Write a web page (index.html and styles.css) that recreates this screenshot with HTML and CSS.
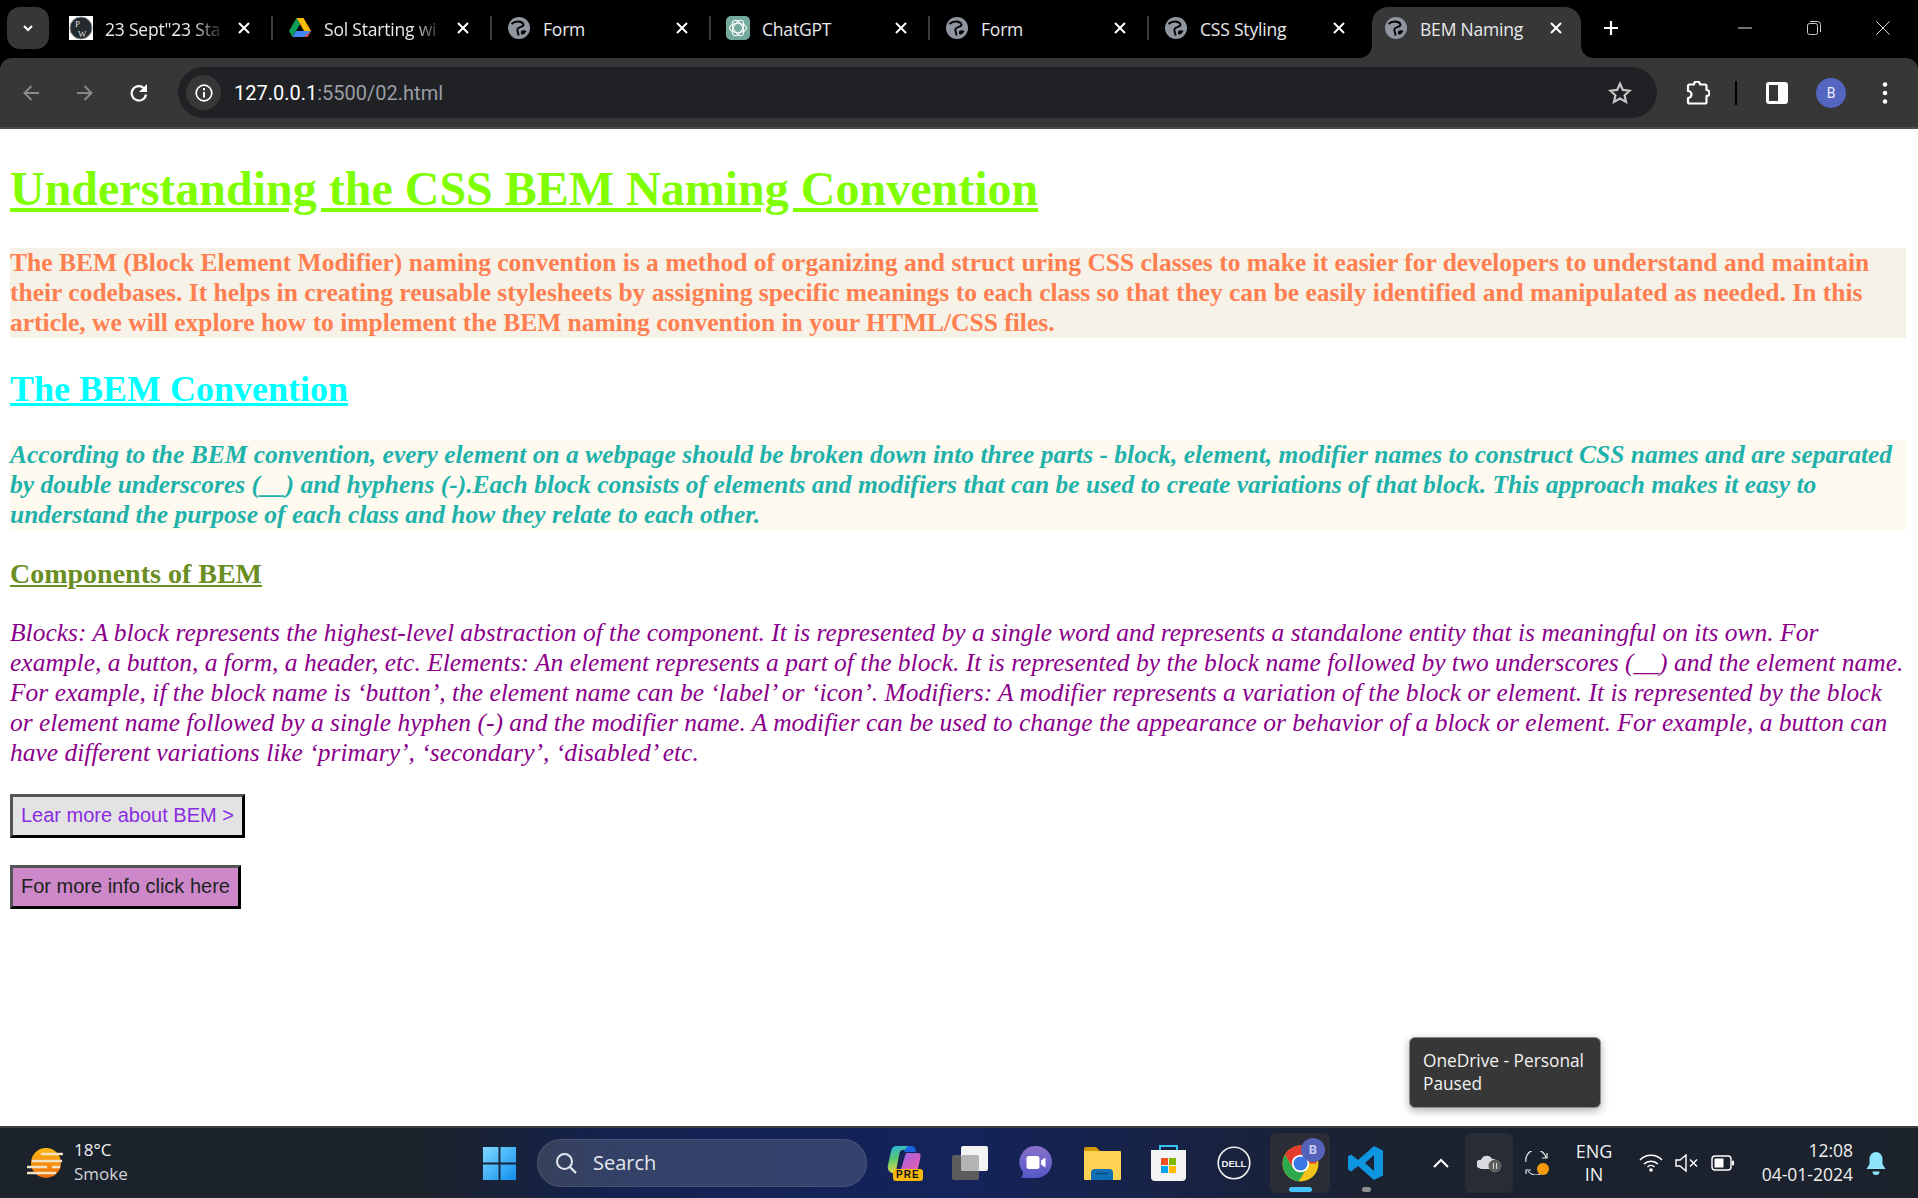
FILE: index.html
```html
<!DOCTYPE html>
<html lang="en">
<head>
<meta charset="utf-8">
<title>BEM Naming</title>
<link rel="stylesheet" href="styles.css">
</head>
<body>
<div class="screen">
  <header class="chrome">
    <div class="tabstrip">
      <div class="tab-search"><svg width="14" height="14" viewBox="0 0 14 14"><path d="M3 5l4 4 4-4" fill="none" stroke="#fff" stroke-width="2"/></svg></div>
      <div class="tab">
        <svg class="fav" width="24" height="24" viewBox="0 0 24 24"><rect width="24" height="24" fill="#fff"/><circle cx="12" cy="12" r="11" fill="#232b2f" stroke="#8d9194" stroke-width="1"/><text x="6" y="11" class="pw">P</text><text x="9" y="20.500" class="pw">W</text></svg>
        <span class="tab-title fade">23 Sept"23 Sta</span><svg class="tab-x" width="12" height="12" viewBox="0 0 12 12"><use href="#close"/></svg>
      </div>
      <div class="tab">
        <svg class="fav fav-drive" width="22" height="20" viewBox="0 0 22 20"><path d="M7.500 0h7l7.500 13h-7z" fill="#fbbc04"/><path d="M7.500 0L0 13l3.500 6L11 6z" fill="#0f9d58"/><path d="M7 13h15l-3.500 6h-15z" fill="#4285f4"/><path d="M22 13l-3.500 6H15z" fill="#ea4335"/></svg>
        <span class="tab-title fade">Sol Starting wi</span><svg class="tab-x" width="12" height="12" viewBox="0 0 12 12"><use href="#close"/></svg>
      </div>
      <div class="tab">
        <svg class="fav fav-globe" width="22" height="22" viewBox="0 0 22 22"><use href="#globe"/></svg>
        <span class="tab-title">Form</span><svg class="tab-x" width="12" height="12" viewBox="0 0 12 12"><use href="#close"/></svg>
      </div>
      <div class="tab">
        <svg class="fav" width="24" height="24" viewBox="0 0 24 24"><rect width="24" height="24" rx="5" fill="#74aa9c"/><g fill="none" stroke="#fff" stroke-width="1.100"><ellipse cx="12" cy="12" rx="8.500" ry="4.500"/><ellipse cx="12" cy="12" rx="8.500" ry="4.500" transform="rotate(60 12 12)"/><ellipse cx="12" cy="12" rx="8.500" ry="4.500" transform="rotate(120 12 12)"/></g></svg>
        <span class="tab-title">ChatGPT</span><svg class="tab-x" width="12" height="12" viewBox="0 0 12 12"><use href="#close"/></svg>
      </div>
      <div class="tab">
        <svg class="fav fav-globe" width="22" height="22" viewBox="0 0 22 22"><use href="#globe"/></svg>
        <span class="tab-title">Form</span><svg class="tab-x" width="12" height="12" viewBox="0 0 12 12"><use href="#close"/></svg>
      </div>
      <div class="tab tab-last">
        <svg class="fav fav-globe" width="22" height="22" viewBox="0 0 22 22"><use href="#globe"/></svg>
        <span class="tab-title">CSS Styling</span><svg class="tab-x" width="12" height="12" viewBox="0 0 12 12"><use href="#close"/></svg>
      </div>
      <div class="tab tab-active">
        <svg class="fav fav-globe" width="22" height="22" viewBox="0 0 22 22"><use href="#globe"/></svg>
        <span class="tab-title">BEM Naming</span><svg class="tab-x" width="12" height="12" viewBox="0 0 12 12"><use href="#close"/></svg>
      </div>
      <div class="tab-new"><svg width="16" height="16" viewBox="0 0 16 16"><path d="M8 1v14M1 8h14" stroke="#fff" stroke-width="2.200"/></svg></div>
      <div class="win-controls">
        <svg width="14" height="14" viewBox="0 0 14 14"><path d="M0 7h14" stroke="#ddd" stroke-width="1"/></svg>
        <svg width="14" height="14" viewBox="0 0 14 14"><rect x=".5" y="2.500" width="10" height="11" rx="2" fill="none" stroke="#ccc"/><path d="M3 .5h7.500a3 3 0 0 1 3 3V11" fill="none" stroke="#ccc"/></svg>
        <svg width="14" height="14" viewBox="0 0 14 14"><path d="M.5.5l13 13M13.500.5l-13 13" stroke="#ddd" stroke-width="1"/></svg>
      </div>
    </div>
    <div class="toolbar">
      <svg class="nav" width="18" height="18" viewBox="0 0 18 18"><path d="M17 9H3M9.500 2L2.500 9l7 7" fill="none" stroke="#8a8a8a" stroke-width="2"/></svg>
      <svg class="nav" width="18" height="18" viewBox="0 0 18 18"><path d="M1 9h14M8.500 2l7 7-7 7" fill="none" stroke="#8a8a8a" stroke-width="2"/></svg>
      <svg class="nav nav-reload" width="18" height="18" viewBox="0 0 18 18"><path d="M16 10.500A7.200 7.200 0 1 1 14 4.300" fill="none" stroke="#fff" stroke-width="2.200"/><path d="M17 0v8H9z" fill="#fff"/></svg>
      <div class="omnibox">
        <span class="info"><svg width="18" height="18" viewBox="0 0 18 18"><circle cx="9" cy="9" r="7.800" fill="none" stroke="#fff" stroke-width="1.700"/><path d="M9 8v5.500M9 4v2.200" stroke="#fff" stroke-width="2"/></svg></span>
        <span class="url"><span class="url-host">127.0.0.1</span>:5500/02.html</span>
        <svg class="star" width="24" height="24" viewBox="0 0 22 22"><path d="M11 2.500l2.600 5.700 6.200.7-4.600 4.200 1.300 6.100L11 16.100l-5.500 3.100 1.300-6.100-4.600-4.200 6.200-.7z" fill="none" stroke="#c7c7c7" stroke-width="2"/></svg>
      </div>
      <div class="tools">
        <svg width="24" height="24" viewBox="0 0 24 24"><path d="M2 5a1.500 1.500 0 0 1 1.500-1.500H8a3 3 0 0 1 6 0h5a1.500 1.500 0 0 1 1.500 1.500v4a3 3 0 0 1 0 6v6a1.500 1.500 0 0 1-1.500 1.500H3.500A1.500 1.500 0 0 1 2 21v-4a3.500 3.500 0 0 0 0-7z" fill="none" stroke="#fff" stroke-width="2.200" stroke-linejoin="round"/></svg>
        <span class="tool-sep"></span>
        <svg width="22" height="22" viewBox="0 0 22 22"><rect width="22" height="22" rx="3" fill="#fff"/><rect x="3" y="3" width="9" height="16" fill="#373737"/></svg>
        <span class="avatar">B</span>
        <svg width="6" height="24" viewBox="0 0 6 24"><circle cx="3" cy="3.500" r="2.300" fill="#fff"/><circle cx="3" cy="12" r="2.300" fill="#fff"/><circle cx="3" cy="20.500" r="2.300" fill="#fff"/></svg>
      </div>
    </div>
  </header>

  <main class="page">
    <h1 class="title">Understanding the CSS BEM Naming Convention</h1>
    <p class="intro">The BEM (Block Element Modifier) naming convention is a method of organizing and struct uring CSS classes to make it easier for developers to understand and maintain their codebases. It helps in creating reusable stylesheets by assigning specific meanings to each class so that they can be easily identified and manipulated as needed. In this article, we will explore how to implement the BEM naming convention in your HTML/CSS files.</p>
    <h2 class="subtitle">The BEM Convention</h2>
    <p class="convention">According to the BEM convention, every element on a webpage should be broken down into three parts - block, element, modifier names to construct CSS names and are separated by double underscores (__) and hyphens (-).Each block consists of elements and modifiers that can be used to create variations of that block. This approach makes it easy to understand the purpose of each class and how they relate to each other.</p>
    <h3 class="section">Components of BEM</h3>
    <p class="body-text">Blocks: A block represents the highest-level abstraction of the component. It is represented by a single word and represents a standalone entity that is meaningful on its own. For example, a button, a form, a header, etc. Elements: An element represents a part of the block. It is represented by the block name followed by two underscores (__) and the element name. For example, if the block name is ‘button’, the element name can be ‘label’ or ‘icon’. Modifiers: A modifier represents a variation of the block or element. It is represented by the block or element name followed by a single hyphen (-) and the modifier name. A modifier can be used to change the appearance or behavior of a block or element. For example, a button can have different variations like ‘primary’, ‘secondary’, ‘disabled’ etc.</p>
    <button class="btn btn-learn">Lear more about BEM &gt;</button>
    <button class="btn btn-info">For more info click here</button>
  </main>

  <div class="tooltip">OneDrive - Personal<br>Paused</div>

  <footer class="taskbar">
    <div class="weather">
      <svg width="36" height="30" viewBox="0 0 36 30"><defs><linearGradient id="sun" x1="0" y1="0" x2="0" y2="1"><stop offset="0" stop-color="#fdb813"/><stop offset="1" stop-color="#ec6a08"/></linearGradient></defs><circle cx="19" cy="15" r="15" fill="url(#sun)"/><path d="M15 6h20M6 13h28M1 19h18M26 19h6M1 25h27" stroke="#f1e3c4" stroke-width="2.600" stroke-linecap="round"/></svg>
      <div class="weather-text"><span class="temp">18°C</span><span class="cond">Smoke</span></div>
    </div>
    <div class="task-center">
      <svg class="start" width="35" height="35" viewBox="0 0 36 36"><defs><linearGradient id="win" x1="0" y1="0" x2="1" y2="1"><stop offset="0" stop-color="#7fd9ff"/><stop offset="1" stop-color="#0f8fef"/></linearGradient></defs><path d="M1 1h16v16H1zM19 1h16v16H19zM1 19h16v16H1zM19 19h16v16H19z" fill="url(#win)"/></svg>
      <div class="search">
        <svg width="24" height="24" viewBox="0 0 24 24"><circle cx="10.500" cy="10.500" r="7.500" fill="none" stroke="#e4e7ef" stroke-width="2"/><path d="M16 16l6 6" stroke="#e4e7ef" stroke-width="2.200"/></svg>
        <span class="search-text">Search</span>
      </div>
      <div class="apps">
        <span class="app app-copilot">
          <svg width="34" height="30" viewBox="0 0 34 30"><defs><linearGradient id="copl" x1="0" y1="0" x2=".3" y2="1"><stop offset="0" stop-color="#1fb2e8"/><stop offset=".5" stop-color="#5ec96e"/><stop offset="1" stop-color="#f0d84a"/></linearGradient><linearGradient id="copr" x1="0" y1="0" x2="1" y2="1"><stop offset="0" stop-color="#a063e8"/><stop offset="1" stop-color="#ee5ca8"/></linearGradient></defs><path d="M9 1h14c2 0 4 2 4 4H16c-2 0-3 1-3.500 3L9 26c-.5 2-2 3-4 2-3-1-5-4-4-8L4 6c.7-3 2.500-5 5-5z" fill="url(#copl)"/><path d="M22 1h3c2 0 3 1 3.500 3L29 7H17c1-3 3-6 5-6z" fill="#1b62e0"/><path d="M19 8h12c2 0 3 2 2.500 4L31 24c-.5 2-2 3-4 3H13z" fill="url(#copr)"/></svg>
          <span class="pre">PRE</span>
        </span>
        <span class="app">
          <svg width="36" height="34" viewBox="0 0 36 34"><rect y="9" width="27" height="25" rx="2" fill="#5c5c5c"/><rect x="9" width="27" height="25" rx="2" fill="#f3f3f3"/><rect x="9" y="9" width="18" height="16" rx="2" fill="#b4b4b4"/></svg>
        </span>
        <span class="app">
          <svg width="34" height="36" viewBox="0 0 34 36"><defs><linearGradient id="chat" x1="0" y1="0" x2="0" y2="1"><stop offset="0" stop-color="#8a70c8"/><stop offset="1" stop-color="#5558c8"/></linearGradient></defs><path d="M17 1a16 16 0 0 1 0 32H2c2-2 2-4 2-6A16 16 0 0 1 17 1z" fill="url(#chat)"/><rect x="7.500" y="11" width="13" height="13" rx="2.500" fill="#fff"/><path d="M22 15.500l4.500-3v10l-4.500-3z" fill="#fff"/></svg>
        </span>
        <span class="app">
          <svg width="37" height="34" viewBox="0 0 37 34"><path d="M0 3a2 2 0 0 1 2-2h10l4 4H0z" fill="#d49b08"/><path d="M0 5h36a1 1 0 0 1 1 1v27a1 1 0 0 1-1 1H1a1 1 0 0 1-1-1z" fill="#fdd252"/><path d="M7 34v-7a4 4 0 0 1 4-4h14a4 4 0 0 1 4 4v7z" fill="#0f6fb5"/><path d="M12 27.500h12" stroke="#0a4a80" stroke-width="1.500"/></svg>
        </span>
        <span class="app">
          <svg width="35" height="36" viewBox="0 0 35 36"><path d="M9 7V1h17v6" fill="none" stroke="#35c1f1" stroke-width="2"/><path d="M0 5h35v27a4 4 0 0 1-4 4H4a4 4 0 0 1-4-4z" fill="#f4f4f4"/><rect x="10" y="13" width="7" height="7" fill="#f25022"/><rect x="18" y="13" width="7" height="7" fill="#7fba00"/><rect x="10" y="21" width="7" height="7" fill="#00a4ef"/><rect x="18" y="21" width="7" height="7" fill="#ffb900"/></svg>
        </span>
        <span class="app">
          <svg width="34" height="34" viewBox="0 0 34 34"><circle cx="17" cy="17" r="15.800" fill="none" stroke="#f0f0f0" stroke-width="1.600"/><text x="17" y="20.500" class="dell">DELL</text></svg>
        </span>
        <span class="app app-running">
          <svg width="37" height="37" viewBox="0 0 36 36"><circle cx="18" cy="18" r="17.500" fill="#f2c318"/><path d="M18 .5A17.500 17.500 0 0 0 3 9.500L11 23l7-5h15.500A17.500 17.500 0 0 0 18 .5z" fill="#e33b2e"/><path d="M3 9.500A17.500 17.500 0 0 0 16 35.500l7-11-12-1.500z" fill="#2da94f"/><circle cx="18" cy="18" r="8.500" fill="#fff"/><circle cx="18" cy="18" r="6.800" fill="#3b78e7"/></svg>
          <span class="profile-badge">B</span>
          <span class="run-bar"></span>
        </span>
        <span class="app">
          <svg width="36" height="36" viewBox="0 0 36 36"><path d="M26 1l9 4.500v25L26 35 10 21l-7 5.500L0 24.500v-13L3 9.500 10 15zM26 10l-9 8 9 8z" fill="#0e95e0"/></svg>
          <span class="open-dot"></span>
        </span>
      </div>
    </div>
    <div class="tray">
      <svg class="chevron" width="16" height="10" viewBox="0 0 16 10"><path d="M1 9l7-7 7 7" fill="none" stroke="#fff" stroke-width="2"/></svg>
      <span class="tray-hover">
        <svg width="25" height="20" viewBox="0 0 25 20"><path d="M2 15a4 4 0 0 1 2-8 6 6 0 0 1 11-1 4 4 0 0 1 2 8l-4 2H4z" fill="#d7d9de"/><circle cx="18" cy="13" r="6.500" fill="#5e5e5e"/><path d="M16.500 10v6M19.500 10v6" stroke="#ddd"/></svg>
      </span>
      <svg class="sync" width="24" height="24" viewBox="0 0 24 24"><path d="M1 11a10 10 0 0 1 20-4M19 20a10 10 0 0 1-16 0" fill="none" stroke="#e8e8e8" stroke-width="1.200"/><path d="M17 7h5V2M1 23v-4h5" fill="none" stroke="#e8e8e8" stroke-width="1.200"/><circle cx="18" cy="18" r="6" fill="#f59a0a"/></svg>
      <div class="lang"><span>ENG</span><span>IN</span></div>
      <div class="status-icons">
        <svg width="24" height="18" viewBox="0 0 24 18"><path d="M1 6a15 15 0 0 1 22 0M5 10a10 10 0 0 1 14 0M8.500 13a5 5 0 0 1 7 0" fill="none" stroke="#fff" stroke-width="1.500"/><circle cx="12" cy="16" r="1.800" fill="#fff"/></svg>
        <svg width="24" height="20" viewBox="0 0 24 20"><path d="M1 7h4l6-5v16l-6-5H1z" fill="none" stroke="#fff" stroke-width="1.400"/><path d="M15 6.500l7 7M22 6.500l-7 7" stroke="#fff" stroke-width="1.400"/></svg>
        <svg width="24" height="16" viewBox="0 0 24 16"><rect x="1" y="1" width="19" height="14" rx="3" fill="none" stroke="#fff" stroke-width="1.400"/><rect x="3.500" y="3.500" width="9" height="9" fill="#fff"/><rect x="21" y="5.500" width="2" height="5" rx="1" fill="#fff"/></svg>
      </div>
      <div class="clock"><span>12:08</span><span>04-01-2024</span></div>
      <svg class="bell" width="20" height="24" viewBox="0 0 20 24"><path d="M10 1a6.500 6.500 0 0 1 6.500 6.500V13l3 5H.5l3-5V7.500A6.500 6.500 0 0 1 10 1z" fill="#8fe4fb"/><path d="M6.500 20.500h7a3.500 3.500 0 0 1-7 0z" fill="#8fe4fb"/></svg>
    </div>
  </footer>

  <svg class="defs" width="0" height="0"><defs>
    <g id="globe"><circle cx="11" cy="11" r="11" fill="#8f96a0"/><path d="M3.500 7C7 3.500 14 3.500 15.500 7.500c.8 2.500-5 2-6 4.500-.8 2 1 3.500 1 6.500" fill="none" stroke="#000" stroke-width="1.900"/><path d="M13 14.500c1.500-1.500 4-1.500 5.500-.5-1 2-2.500 3.200-4.500 3.800-1-1-1.300-2.300-1-3.300z" fill="#000"/></g>
    <path id="close" d="M1 1l10 10M11 1L1 11" stroke="#fff" stroke-width="2" fill="none"/>
  </defs></svg>
</div>
</body>
</html>
```
FILE: styles.css
```css
* { box-sizing: border-box; }
html, body { margin: 0; padding: 0; }
body { width: 1918px; height: 1198px; overflow: hidden; background: #fff; }
.screen { width: 1918px; height: 1198px; display: flex; flex-direction: column; position: relative; overflow: hidden; }
.defs { position: absolute; }

/* browser chrome */
.chrome { flex: none; height: 129px; background: #000; font-family: "Open Sans", "Noto Sans", sans-serif; }
.tabstrip { height: 58px; display: flex; align-items: flex-start; padding: 7px 0 0 7px; }
.tab-search { width: 42px; height: 42px; margin-right: 5px; background: #373737; border-radius: 13px; display: flex; align-items: center; justify-content: center; }
.tab { width: 219px; height: 51px; display: flex; align-items: center; padding: 0 20px 9px 15px; position: relative; color: #e8eaed; flex: none; }
.tab::after { content: ""; position: absolute; right: 0; top: 9px; height: 24px; width: 2px; background: #3c3c3c; }
.tab-last::after { display: none; }
.tab-active { background: #373737; border-radius: 16px 16px 0 0; width: 209px; margin-left: 4px; padding-left: 12px; padding-right: 16px; }
.tab-active::before, .tab-active::after { content: ""; position: absolute; bottom: 0; top: auto; width: 12px; height: 12px; right: auto; background: radial-gradient(circle at 0 0, transparent 11.500px, #373737 12px); }
.tab-active::before { left: -12px; }
.tab-active::after { left: 100%; background: radial-gradient(circle at 100% 0, transparent 11.500px, #373737 12px); }
.fav { flex: none; }
.fav-globe { margin: 0 1px; }
.fav-drive { margin: 0 1px 0 1px; }
.pw { font-family: "Liberation Serif", serif; font-size: 9px; fill: #ddd; }
.tab-title { font-size: 17.500px; margin: 1px 12px 0 12px; flex: 1; white-space: nowrap; overflow: hidden; letter-spacing: -.2px; }
.fade { -webkit-mask-image: linear-gradient(90deg, #000 72%, transparent 100%); mask-image: linear-gradient(90deg, #000 72%, transparent 100%); }
.tab-x { flex: none; margin-right: 3px; }
.tab-new { width: 30px; height: 42px; margin-left: 15px; display: flex; align-items: center; justify-content: center; }
.win-controls { display: flex; gap: 55px; margin-left: auto; padding: 14px 28px 0 0; }

.toolbar { height: 71px; background: #373737; border-radius: 12px 12px 0 0; border-bottom: 2px solid #4c4c4c; display: flex; align-items: center; padding: 0 0 0 22px; }
.nav { margin-right: 36px; flex: none; }
.nav-reload { margin-right: 30px; }
.omnibox { width: 1479px; height: 51px; background: #202124; border-radius: 26px; display: flex; align-items: center; padding: 0 25px 0 8px; flex: none; }
.info { width: 35px; height: 35px; background: #373737; border-radius: 50%; display: flex; align-items: center; justify-content: center; flex: none; }
.url { font-family: "Roboto", sans-serif; font-size: 20px; color: #9a9ea4; margin-left: 13px; flex: 1; }
.url-host { color: #fff; }
.star { flex: none; }
.tools { display: flex; align-items: center; margin-left: 29px; }
.tool-sep { width: 2px; height: 24px; background: #000; margin: 0 29px 0 25px; }
.avatar { width: 30px; height: 30px; margin: 0 36px 0 28px; background: #5566c0; color: #eef; border-radius: 50%; display: flex; align-items: center; justify-content: center; font-size: 14px; font-family: "Roboto", sans-serif; }

/* page content */
.page { flex: 1; background: #fff; padding: 32px 12px 0 10px; font-family: "Liberation Serif", serif; overflow: hidden; min-height: 0; }
.title { margin: 0 0 32px; font-size: 48px; line-height: 55px; font-weight: 700; color: #7fff00; text-decoration: underline; }
.intro { margin: 0 0 30px; font-size: 25.500px; line-height: 30px; font-weight: 700; color: #ff7f50; background: #f7f2e8; }
.subtitle { margin: 0 0 30px; font-size: 36px; line-height: 42px; font-weight: 700; color: #00ffff; text-decoration: underline; }
.convention { margin: 0 0 28px; font-size: 25.500px; line-height: 30px; font-weight: 700; font-style: italic; color: #20b2aa; background: #fffaf0; }
.section { margin: 0 0 28px; font-size: 28px; line-height: 32px; font-weight: 700; color: #6b8e23; text-decoration: underline; }
.body-text { margin: 0 0 26px; font-size: 25.500px; line-height: 30px; font-style: italic; color: #8b008b; }
.btn { display: block; height: 44px; padding: 0 8px 2px; font-family: "Liberation Sans", sans-serif; font-size: 20px; border: 3px solid; border-color: #555 #000 #000 #555; }
.btn-learn { background: #e3e3e3; color: #8a2be2; margin-bottom: 27px; }
.btn-info { background: #cc88c8; color: #222; }

/* tooltip */
.tooltip { position: absolute; left: 1409px; top: 1037px; width: 192px; height: 71px; background: #373737; border: 1px solid #8b8b8b; border-radius: 6px; box-shadow: 0 3px 8px rgba(0,0,0,.3); color: #f2f2f2; font-family: "Open Sans", "Noto Sans", sans-serif; font-size: 17.300px; line-height: 23px; padding: 11px 13px; white-space: nowrap; }

/* taskbar */
.taskbar { flex: none; height: 72px; display: flex; align-items: center; border-top: 2px solid #3b3f46; background: linear-gradient(90deg, #1c222b 0, #1c222b 22%, #13224f 32%, #14235a 50%, #1b2230 72%, #1b222c 100%); font-family: "Open Sans", "Noto Sans", sans-serif; color: #f0f0f0; }
.weather { display: flex; align-items: center; gap: 11px; margin-left: 27px; width: 449px; flex: none; }
.weather-text { display: flex; flex-direction: column; font-size: 17px; line-height: 24px; margin-bottom: 2px; }
.cond { color: #d0d3d8; }
.task-center { display: flex; align-items: center; flex: none; }
.start { margin-left: 6px; }
.search { width: 330px; height: 48px; margin-left: 20px; border-radius: 24px; background: rgba(255,255,255,.14); border: 1px solid rgba(255,255,255,.1); display: flex; align-items: center; padding-left: 16px; gap: 15px; }
.search-text { font-size: 20px; color: #e6e8ee; margin-bottom: 2px; }
.apps { display: flex; align-items: center; gap: 10px; margin-left: 9px; }
.app { width: 56px; height: 60px; display: flex; align-items: center; justify-content: center; position: relative; }
.app-copilot svg { margin-top: -7px; }
.pre { position: absolute; left: 17px; bottom: 12px; background: #f9b90c; color: #111; font: 700 10px/12px "Liberation Sans", sans-serif; letter-spacing: 1px; padding: 0 3px; border-radius: 3px; }
.app-running { background: #2a2d35; border-radius: 6px; width: 60px; margin: 0 -2px; }
.dell { font: 700 9.500px "Liberation Sans", sans-serif; fill: #f0f0f0; text-anchor: middle; }
.profile-badge { position: absolute; right: 5px; top: 5px; width: 24px; height: 24px; border-radius: 50%; background: #5562b8; color: #c8cef0; font: 700 13px/24px "Roboto", sans-serif; text-align: center; }
.run-bar { position: absolute; left: 19px; bottom: 1px; width: 23px; height: 5px; background: #48c0f8; border-radius: 3px; }
.open-dot { position: absolute; left: 24px; bottom: 1px; width: 9px; height: 5px; background: #8e8e8e; border-radius: 3px; }
.tray { display: flex; align-items: center; margin-left: auto; padding-right: 32px; }
.chevron { margin-right: 16px; }
.tray-hover { width: 48px; height: 60px; background: #272c35; border-radius: 6px; display: flex; align-items: center; justify-content: center; }
.sync { margin: 0 20px 0 12px; }
.lang { display: flex; flex-direction: column; align-items: center; width: 50px; font-size: 18px; line-height: 23px; margin: 0 20px 1px 0; }
.status-icons { display: flex; align-items: center; gap: 12px; }
.clock { display: flex; flex-direction: column; align-items: flex-end; width: 93px; white-space: nowrap; font-size: 17.500px; line-height: 24px; margin: 0 13px 2px 25px; }
```
